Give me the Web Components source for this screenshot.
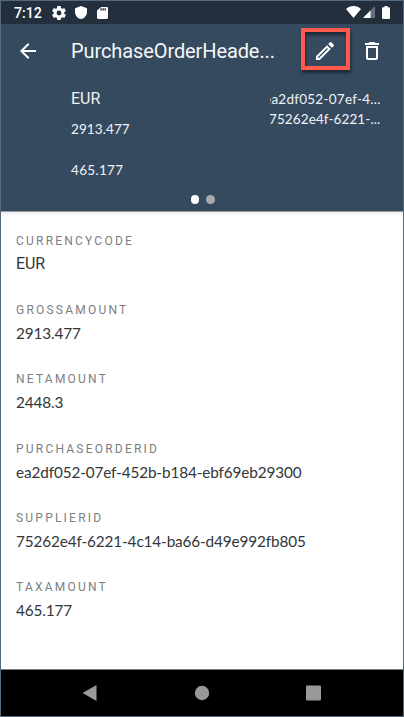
<!DOCTYPE html>
<html lang="en"><head><meta charset="utf-8"><title>PurchaseOrderHeader</title>
<style>html,body{margin:0;height:717px;overflow:hidden}body{font-family:Lato,"Noto Sans",sans-serif}</style></head>
<body><app-screen></app-screen>
<script>
const define=(name,html,init)=>customElements.define(name,class extends HTMLElement{
  connectedCallback(){ if(this.shadowRoot)return; const r=this.attachShadow({mode:'open'}); r.innerHTML=html; if(init)init(this,r); }
});
define('fit-text',`<style>:host{display:block;white-space:nowrap}</style><span><slot></slot></span>`,(el)=>{
  el.style.letterSpacing=el.getAttribute('tracking')||'';
});
define('status-bar',`<style>:host{display:flex;box-sizing:border-box;height:23px;background:#232f3c;padding:0 13px 0 13px;align-items:center;color:#fff;font:500 14.2px/23px Roboto,sans-serif}
span{width:38px;letter-spacing:0;margin-top:1px}svg{display:block;fill:#fff}.r{margin-left:auto;display:flex;align-items:center;margin-top:-1px}</style>
<span>7:12</span>
<svg width="14" height="14" viewBox="2 2 20 20"><path fill-rule="evenodd" d="M19.43 12.98c.04-.32.07-.64.07-.98s-.03-.66-.07-.98l2.11-1.65c.19-.15.24-.42.12-.64l-2-3.46c-.12-.22-.39-.3-.61-.22l-2.49 1c-.52-.4-1.08-.73-1.69-.98l-.38-2.65A.49.49 0 0 0 14 2h-4c-.25 0-.46.18-.49.42l-.38 2.65c-.61.25-1.17.59-1.69.98l-2.49-1c-.23-.09-.49 0-.61.22l-2 3.46c-.13.22-.07.49.12.64l2.11 1.65c-.04.32-.07.65-.07.98s.03.66.07.98l-2.11 1.65c-.19.15-.24.42-.12.64l2 3.46c.12.22.39.3.61.22l2.49-1c.52.4 1.08.73 1.69.98l.38 2.65c.03.24.24.42.49.42h4c.25 0 .46-.18.49-.42l.38-2.65c.61-.25 1.17-.59 1.69-.98l2.49 1c.23.09.49 0 .61-.22l2-3.46c.12-.22.07-.49-.12-.64zM12 15.5a3.5 3.5 0 1 1 0-7 3.5 3.5 0 0 1 0 7z"/></svg>
<svg width="12" height="13" viewBox="3 1 18 22" preserveAspectRatio="none" style="margin-left:9px"><path d="M12 1 3 5v6c0 5.55 3.84 10.74 9 12 5.16-1.26 9-6.45 9-12V5z"/></svg>
<svg width="11" height="12" viewBox="4 2 16 20" preserveAspectRatio="none" style="margin-left:10px"><path fill-rule="evenodd" d="M18 2h-8L4 8v12c0 1.100.9 2 2 2h12c1.100 0 2-.9 2-2V4c0-1.100-.9-2-2-2zM9 4h2v4H9zM12 4h2v4h-2zM15 4h2v4h-2z"/></svg>
<div class="r"><svg width="15" height="12" viewBox="0 0 15 12"><path d="M0 3.100C4-.9 11-.9 15 3.100L7.500 12z"/></svg>
<svg width="12" height="12" viewBox="0 0 12 12" style="margin-left:2px"><path fill="#65707b" d="M12 0V12H0z"/><path d="M7.500 4.500V12H0z"/></svg>
<svg width="8" height="13" viewBox="0 0 8 13" style="margin:0 0 0 7px"><path d="M2.500 0h3v1.200H7q1 0 1 1V12q0 1-1 1H1q-1 0-1-1V2.200q0-1 1-1h1.500z"/></svg></div>`);
define('tool-bar',`<style>:host{display:flex;height:55px;align-items:center;color:#f4f6f8}svg{display:block;fill:#fff}svg,.box{flex:none}
.back{margin:-1px 31px 0 15px}.title{font:20px/26px Roboto,sans-serif;width:212px;margin-top:-2px}
.box{box-sizing:border-box;margin-left:18px;margin-top:-5px;width:49px;height:42px;border:4px solid #ff5a4b;box-shadow:1px 3px 3px #0c1520a0,inset 1px 3px 3px #0c1520a0;display:grid;place-items:center}.box svg{margin:3px 2px 0 0}.bin{margin:-2px 0 0 10px}</style>
<svg class="back" width="24" height="24" viewBox="0 0 24 24"><path d="M20 11H7.830l5.590-5.590L12 4l-8 8 8 8 1.410-1.410L7.830 13H20z"/></svg>
<fit-text class="title" tracking="-.1px">PurchaseOrderHeade...</fit-text>
<div class="box"><svg width="24" height="24" viewBox="0 0 24 24"><path d="M14.060 9.020l.92.92L5.920 19H5v-.92zM17.660 3c-.25 0-.51.1-.7.29l-1.830 1.830 3.750 3.750 1.830-1.830a1 1 0 0 0 0-1.410l-2.340-2.340c-.2-.2-.45-.29-.71-.29zm-3.600 3.190L3 17.250V21h3.750L17.810 9.940z"/></svg></div>
<svg class="bin" width="24" height="24" viewBox="0 0 24 24"><path fill-rule="evenodd" d="M6 19c0 1.100.9 2 2 2h8c1.100 0 2-.9 2-2V7H6zM8 9h8v10H8zM15.500 4l-1-1h-5l-1 1H5v2h14V4z"/></svg>`);
define('object-header',`<style>:host{display:flex;flex-direction:column;height:132px;color:#f0f3f5}
.cols{display:flex;height:110px;padding:0 23px 0 70px;justify-content:space-between}.l{padding-top:10px}.r{width:110px;padding-top:11px;overflow:hidden}
.e{font:16px/20px Roboto,sans-serif}.n{font-size:13.500px;line-height:20px}.r .n{line-height:19.500px}.clip{margin-left:-6px}
.dots{display:flex;justify-content:center;gap:7px;padding:6px 0 0 1px}.dots i{width:8.500px;height:8.500px;border-radius:50%;background:#fff}.dots i+i{background:#aaa}</style>
<div class="cols"><div class="l"><fit-text class="e">EUR</fit-text><fit-text class="n" tracking=".1px" style="margin-top:10px">2913.477</fit-text><fit-text class="n" tracking=".3px" style="margin-top:21px">465.177</fit-text></div>
<div class="r"><fit-text class="n clip" tracking=".25px">ea2df052-07ef-4...</fit-text><fit-text class="n" tracking=".1px" style="margin-left:-1px">75262e4f-6221-...</fit-text></div></div>
<div class="dots"><i></i><i></i></div>`);
define('form-cell',`<style>:host{display:block;height:69.400px}.k{font:12px/16px Roboto,sans-serif;letter-spacing:2.220px;color:#7b7e81}.v{font-size:15.300px;line-height:20px;margin-top:5px;color:#32363a;letter-spacing:-.12px}:host([text]) .v{font:16px/20px Roboto,sans-serif}</style>
<div class="k"><slot name="label"></slot></div><div class="v"><slot></slot></div>`);
define('nav-bar',`<style>:host{display:flex;box-sizing:border-box;height:47px;background:#000;align-items:center;justify-content:center;border-top:1px solid #777e7c}svg{display:block;fill:#999}</style>
<svg width="240" height="16" viewBox="0 0 240 16"><path d="M14.500 0V16L.5 8z"/><circle cx="120" cy="8" r="7.200"/><rect x="224" y=".5" width="15" height="15" rx="1"/></svg>`);
define('app-screen',`<style>:host{display:flex;flex-direction:column;box-sizing:border-box;width:404px;height:717px;border:1px solid #56697a;background:#fff}
.top{background:#354a5f;height:187px}.body{flex:1;padding:21.500px 15px 0;box-shadow:inset 0 1px 0 #9a9da2,inset 0 5px 4px -3px #e9e4e6}</style>
<status-bar></status-bar><div class="top"><tool-bar></tool-bar><object-header></object-header></div>
<div class="body">${[['CURRENCYCODE','EUR'],['GROSSAMOUNT','2913.477'],['NETAMOUNT','2448.3'],['PURCHASEORDERID','ea2df052-07ef-452b-b184-ebf69eb29300'],['SUPPLIERID','75262e4f-6221-4c14-ba66-d49e992fb805'],['TAXAMOUNT','465.177']].map(([k,v])=>`<form-cell${v==='EUR'?' text':''}><span slot="label">${k}</span>${v}</form-cell>`).join('')}</div><nav-bar></nav-bar>`);
</script></body></html>
